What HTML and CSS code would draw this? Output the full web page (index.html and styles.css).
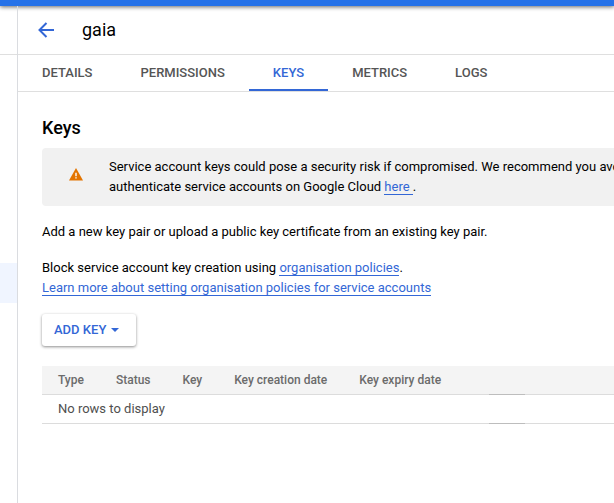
FILE: index.html
```html
<!DOCTYPE html>
<html lang="en-GB">
<head>
    <meta charset="UTF-8">
    <meta name="viewport" content="width=device-width, initial-scale=1.0">
    <title>gaia - Service account keys</title>
    <link rel="stylesheet" href="styles.css">
</head>
<body>
    <div class="topbar"></div>

    <div class="layout">
        <aside class="sidebar">
            <div class="sidebar-header"></div>
            <div class="sidebar-active"></div>
        </aside>

        <main class="main">
            <header class="page-header">
                <a href="#back" class="back" aria-label="Back">
                    <svg width="16" height="16" viewBox="0 0 16 16" fill="none" stroke="currentColor" stroke-width="2">
                        <path d="M16 8H1.5M8.5 1L1.5 8l7 7"/>
                    </svg>
                </a>
                <h1>gaia</h1>
            </header>

            <nav class="tabs">
                <a href="#details">DETAILS</a>
                <a href="#permissions">PERMISSIONS</a>
                <a href="#keys" class="active">KEYS</a>
                <a href="#metrics">METRICS</a>
                <a href="#logs">LOGS</a>
            </nav>

            <section class="content">
                <h2>Keys</h2>

                <div class="alert">
                    <svg class="alert-icon" width="14" height="13" viewBox="0 0 14 13">
                        <path fill="#e37400" d="M7 0l7 12.5H0z"/>
                        <path fill="#fff" d="M6.3 4.8h1.4v3.4H6.3zM6.3 9.2h1.4v1.4H6.3z"/>
                    </svg>
                    <p>Service account keys could pose a security risk if compromised. We recommend you avoid<br>authenticate service accounts on Google Cloud <a href="#here" class="link">here&nbsp;</a>.</p>
                </div>

                <p class="intro">Add a new key pair or upload a public key certificate from an existing key pair.</p>

                <p class="policy">
                    Block service account key creation using <a href="#policies" class="link">organisation policies</a>.<br>
                    <a href="#learn" class="link">Learn more about setting organisation policies for service accounts</a>
                </p>

                <button type="button" class="add-key">
                    ADD KEY
                    <svg width="8" height="4" viewBox="0 0 8 4"><path fill="currentColor" d="M0 0h8L4 4z"/></svg>
                </button>

                <table class="keys-table">
                    <thead>
                        <tr>
                            <th>Type</th>
                            <th>Status</th>
                            <th>Key</th>
                            <th>Key creation date</th>
                            <th>Key expiry date</th>
                            <th></th>
                            <td class="actions"></td>
                            <td class="filler"></td>
                        </tr>
                    </thead>
                    <tbody>
                        <tr>
                            <td colspan="6">No rows to display</td>
                            <td class="actions"></td>
                            <td class="filler"></td>
                        </tr>
                    </tbody>
                </table>
            </section>
        </main>
    </div>
</body>
</html>
```
FILE: styles.css
```css
* {
    margin: 0;
    padding: 0;
    box-sizing: border-box;
}

body {
    display: flex;
    flex-direction: column;
    min-height: 100vh;
    overflow-x: hidden;
    background: #fff;
    color: #000;
    font-family: Roboto, "Liberation Sans", sans-serif;
    font-size: 13px;
    line-height: 20px;
}

.topbar {
    height: 6px;
    background: #2672e8;
    box-shadow: 0 1px 4px rgba(0, 0, 0, 0.6);
}

.layout {
    display: flex;
    flex: 1;
}

.sidebar {
    width: 18px;
    border-right: 1px solid #dadce0;
}

.sidebar-header {
    height: 49px;
    border-bottom: 1px solid #dfdfdf;
}

.sidebar-active {
    height: 40px;
    margin-top: 208px;
    background: #f0f5ff;
}

.main {
    flex: 1;
    min-width: 0;
    overflow: hidden;
}

.page-header {
    display: flex;
    align-items: center;
    gap: 28px;
    height: 49px;
    padding-left: 20px;
    border-bottom: 1px solid #dfdfdf;
}

.page-header h1 {
    font-size: 18px;
    font-weight: 400;
}

.back {
    display: flex;
    color: #3367d6;
}

.tabs {
    display: flex;
    height: 37px;
    border-bottom: 1px solid #dfdfdf;
}

.tabs a {
    padding: 8px 24px 0;
    color: #555;
    font-weight: 500;
    text-decoration: none;
}

.tabs a.active {
    color: #3367d6;
    border-bottom: 2px solid #3367d6;
}

.content {
    padding: 24px 0 24px 24px;
}

.content h2 {
    margin-bottom: 8px;
    font-size: 18px;
    font-weight: 500;
    line-height: 24px;
}

.link {
    color: #3367d6;
    text-decoration: none;
    border-bottom: 1px solid #3367d6;
}

.alert {
    display: flex;
    gap: 26px;
    margin-bottom: 16px;
    padding: 9px 0 9px 27px;
    background: #f1f1f1;
    border-radius: 4px 0 0 4px;
    white-space: nowrap;
}

.alert-icon {
    flex: none;
    margin-top: 11px;
}

.intro {
    margin-bottom: 16px;
}

.policy {
    margin-bottom: 16px;
}

.add-key {
    display: flex;
    align-items: center;
    gap: 5px;
    height: 32px;
    margin-bottom: 20px;
    padding: 0 17px 1px 12px;
    border: none;
    border-radius: 3px;
    background: #fff;
    color: #3367d6;
    font: 500 13px Roboto, "Liberation Sans", sans-serif;
    box-shadow: 0 1px 3px rgba(0, 0, 0, 0.45);
    cursor: pointer;
}

.keys-table {
    width: 100%;
    border-collapse: collapse;
    line-height: 28px;
    white-space: nowrap;
}

.keys-table th,
.keys-table td {
    padding: 0 16px;
    border-bottom: 1px solid #dcdcdc;
    color: #4f4f4f;
    text-align: left;
}

.keys-table thead {
    background: #f4f4f4;
}

.keys-table th {
    color: #6b6b6b;
    font-size: 12px;
    font-weight: 500;
}

.keys-table .actions {
    min-width: 36px;
    padding: 0;
    border-bottom-color: #bdbdbd;
}

.keys-table .filler {
    width: 100%;
    padding: 0;
}
```
